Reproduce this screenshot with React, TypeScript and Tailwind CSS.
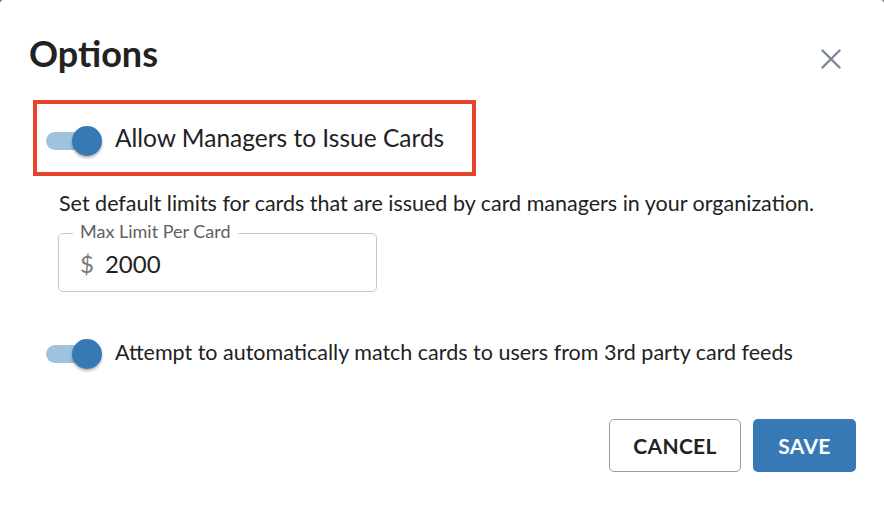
import React, { useState } from 'react';

function Toggle({ on, onChange }: { on: boolean; onChange: () => void }) {
  return (
    <button onClick={onChange} className="relative w-[56px] h-[30px] shrink-0">
      <span className={`absolute left-0 top-[6px] w-[50px] h-[18px] rounded-full ${on ? 'bg-[#9fc2df]' : 'bg-[#bdbdbd]'}`} />
      <span
        className={`absolute top-0 w-[30px] h-[30px] rounded-full shadow-[0_2px_3px_rgba(0,0,0,0.3)] ${on ? 'left-[26px] bg-[#3679b5]' : 'left-0 bg-[#fafafa]'}`}
      />
    </button>
  );
}

export default function App() {
  const [allowManagers, setAllowManagers] = useState(true);
  const [autoMatch, setAutoMatch] = useState(true);
  const [limit, setLimit] = useState('2000');

  return (
    <div className="w-[884px] h-[510px] bg-[#7a7a7a]" style={{ fontFamily: 'Lato, "Open Sans", sans-serif' }}>
      <div className="w-full h-full bg-white rounded-t-[4px] flex flex-col pl-[29px] pr-[28px] text-[#222222]">
        {/* Header */}
        <div className="flex justify-between pt-[32px]">
          <h1 className="text-[36px] leading-[1.2] font-bold text-[#222222]">Options</h1>
          <button className="mt-[17px] mr-[15px] w-[20px] h-[20px] text-[#7b8794]">
            <svg viewBox="0 0 20 20" width="20" height="20" fill="none" stroke="currentColor" strokeWidth="2.4" strokeLinecap="round">
              <path d="M1.5 1.5L18.5 18.5M18.5 1.5L1.5 18.5" />
            </svg>
          </button>
        </div>

        {/* Highlighted option */}
        <div className="mt-[25px] ml-[4px] w-[443px] h-[76px] border-4 border-[#e8432d] flex items-start pl-[9px] pt-[22px]">
          <Toggle on={allowManagers} onChange={() => setAllowManagers(!allowManagers)} />
          <span className="ml-[13px] -mt-[3px] text-[24.5px] leading-[1.2] text-[#222222]">Allow Managers to Issue Cards</span>
        </div>

        <p className="mt-[15px] ml-[30px] text-[21.5px] leading-[1.2] text-[#222222]">
          Set default limits for cards that are issued by card managers in your organization.
        </p>

        {/* Limit input */}
        <div className="relative mt-[16px] ml-[29px] w-[319px] h-[59px] rounded-[5px] border border-[#c8c8c8] flex items-center pl-[21px]">
          <span className="absolute -top-[13px] left-[14px] px-[7px] bg-white text-[18px] leading-[1.2] text-[#616161]">Max Limit Per Card</span>
          <span className="text-[24px] leading-[1.2] text-[#7a7a7a] mt-[3px]">$</span>
          <input
            value={limit}
            onChange={(e) => setLimit(e.target.value)}
            className="ml-[11px] mt-[3px] w-[200px] text-[24px] leading-[1.2] text-[#222222] outline-none bg-transparent"
          />
        </div>

        <div className="mt-[47px] ml-[17px] flex items-start">
          <Toggle on={autoMatch} onChange={() => setAutoMatch(!autoMatch)} />
          <span className="ml-[13px] mt-[1px] text-[21.5px] leading-[1.2] text-[#222222]">
            Attempt to automatically match cards to users from 3rd party card feeds
          </span>
        </div>

        {/* Footer */}
        <div className="mt-[50px] flex justify-end gap-[12px]">
          <button className="w-[132px] h-[53px] rounded-[5px] border border-[#9e9e9e] bg-white text-[21px] font-bold text-[#222222] tracking-[0.3px]">
            CANCEL
          </button>
          <button className="w-[103px] h-[53px] rounded-[5px] bg-[#3679b5] text-[21px] font-bold text-white tracking-[0.3px]">
            SAVE
          </button>
        </div>
      </div>
    </div>
  );
}
